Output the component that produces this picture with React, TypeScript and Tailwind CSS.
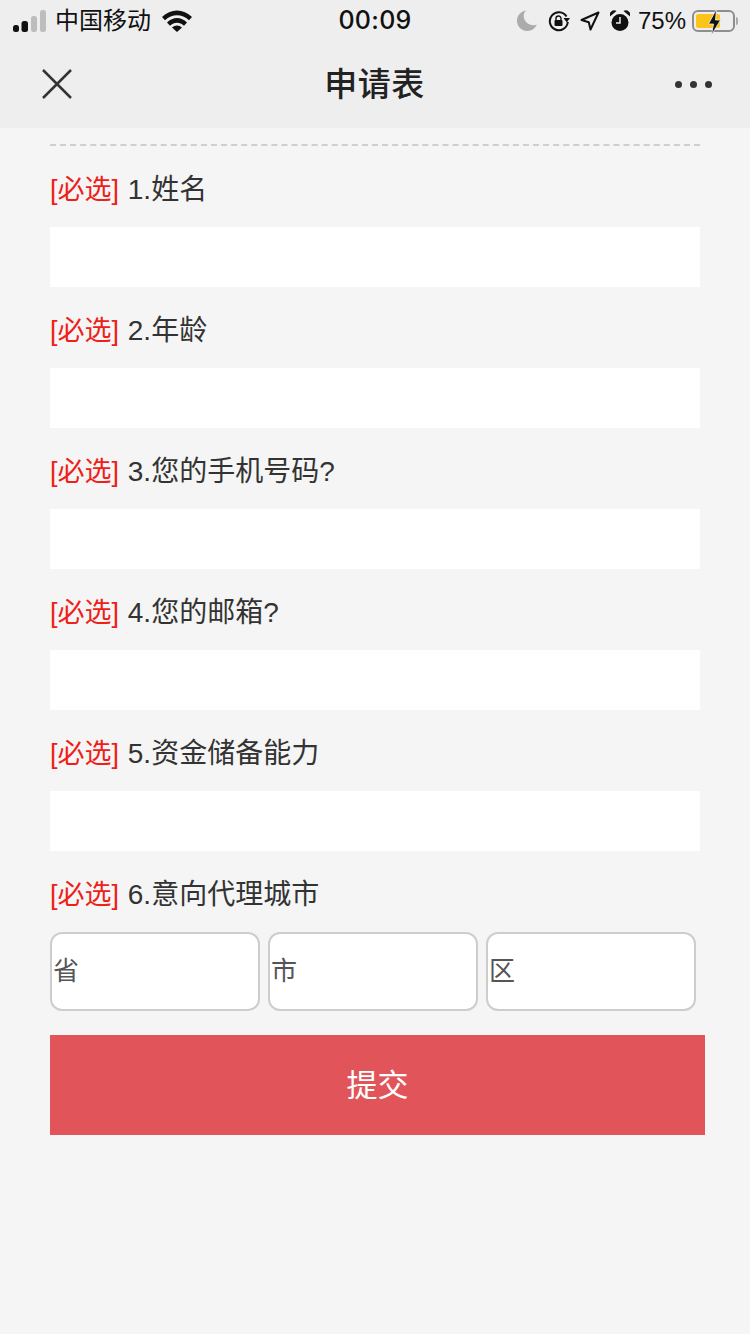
const fontStack = "[font-family:'Liberation_Sans','Noto_Sans_CJK_SC',sans-serif]"

const fields = ['1.姓名', '2.年龄', '3.您的手机号码?', '4.您的邮箱?', '5.资金储备能力']

function Label({ text }: { text: string }) {
  return (
    <div className="h-10 text-[28px] leading-[42px] text-[#333] whitespace-nowrap">
      <span className="mr-[1px] text-[27px] text-[#ee2018]">[必选]</span> {text}
    </div>
  )
}

function StatusBar() {
  return (
    <div className="h-10 flex items-center justify-between pl-[13px] pr-[12px] pt-[1px] text-[#111]">
      <div className="flex items-center w-[225px]">
        <svg width="34" height="22" viewBox="0 0 34 22">
          <rect x="0" y="15" width="6" height="7" rx="2.5" fill="#111" />
          <rect x="8.500" y="11" width="6.500" height="11" rx="2.5" fill="#111" />
          <rect x="18" y="6" width="6" height="16" rx="2.5" fill="#bdbdbd" />
          <rect x="27" y="0" width="6" height="22" rx="2.5" fill="#bdbdbd" />
        </svg>
        <span className="ml-[8px] text-[24px] leading-none">中国移动</span>
        <svg className="ml-[11px]" width="30" height="22" viewBox="0 0 30 22">
          <path d="M0 7C8.500-1.800 21.500-1.800 30 7l-3 3.300C20 3.600 10 3.600 3 10.300Z" fill="#111" />
          <path d="M5 12.500C10.800 6.500 19.200 6.500 25 12.500l-3 3.200C18 11.800 12 11.800 8 15.700Z" fill="#111" />
          <path d="M10 17.500c3-2.700 7-2.700 10 0L15 22Z" fill="#111" />
        </svg>
      </div>
      <span className="[font-family:Inter,sans-serif] text-[25px] leading-none font-medium tracking-[0.3px]">00:09</span>
      <div className="flex items-center justify-end w-[226px]">
        <svg width="20" height="21" viewBox="0 0 20 21">
          <path d="M9 .5C3.800 1.300 0 5.500 0 10.700 0 16.400 4.600 21 10.300 21c4.300 0 8-2.600 9.500-6.400-1.100.4-2.300.6-3.500.6C10.800 15.200 6.700 11 6.700 5.600c0-1.900.8-3.600 2.300-5.100Z" fill="#ababab" />
        </svg>
        <svg className="ml-[11px]" width="22" height="22" viewBox="0 0 22 22">
          <path d="M18.500 6.500A9 9 0 1 0 19.800 12" fill="none" stroke="#111" strokeWidth="2" />
          <path d="M15.500 8h6.500l-3.200 4.500Z" fill="#111" />
          <rect x="6.500" y="10" width="8" height="6" rx="1" fill="#111" />
          <path d="M8 10V8.500a2.500 2.500 0 0 1 5 0V10" fill="none" stroke="#111" strokeWidth="1.400" />
        </svg>
        <svg className="ml-[10px]" width="20" height="20" viewBox="0 0 20 20">
          <path d="M18.500 1.500 10.500 18.500 8.800 11.200 1.500 9Z" fill="none" stroke="#111" strokeWidth="2" strokeLinejoin="round" />
        </svg>
        <svg className="ml-[10px]" width="20" height="22" viewBox="0 0 20 22">
          <circle cx="10" cy="12.500" r="8.500" fill="#111" />
          <path d="M10 7v6H6" fill="none" stroke="#eee" strokeWidth="1.500" />
          <path d="M0 6.500a4.500 4.500 0 0 1 6.500-5.500ZM20 6.500a4.500 4.500 0 0 0-6.500-5.500Z" fill="#111" />
        </svg>
        <span className="ml-[8px] text-[24px] leading-none">75%</span>
        <div className="ml-[6px] flex items-center">
          <div className="relative w-[43px] h-[22px] rounded-[6px] border-2 border-[#8e8e8e] p-[2px]">
            <div className="h-full w-[24px] rounded-[2px] bg-[#fcc419]" />
            <svg className="absolute left-[13px] -top-[3px]" width="15" height="26" viewBox="0 0 14 26">
              <path d="M9 0 1 15h5L4 26l9-15H8Z" fill="#111" stroke="#eee" strokeWidth="0.800" />
            </svg>
          </div>
          <div className="ml-[1px] w-[2px] h-[8px] rounded-r-sm bg-[#aaa]" />
        </div>
      </div>
    </div>
  )
}

function NavBar() {
  return (
    <div className="h-[88px] flex items-center justify-between px-[38px]">
      <svg width="38" height="38" viewBox="0 0 38 38">
        <path d="M5 5 33 33M33 5 5 33" stroke="#333" strokeWidth="2.500" fill="none" />
      </svg>
      <h1 className="-ml-[2px] text-[33px] leading-none font-medium text-[#222] tracking-[0.500px]">申请表</h1>
      <div className="flex gap-[8px]">
        <span className="w-[7px] h-[7px] rounded-full bg-[#333]" />
        <span className="w-[7px] h-[7px] rounded-full bg-[#333]" />
        <span className="w-[7px] h-[7px] rounded-full bg-[#333]" />
      </div>
    </div>
  )
}

export default function App() {
  return (
    <div className={`w-[750px] h-[1334px] overflow-hidden bg-[#f5f5f5] ${fontStack}`}>
      <div className="h-[128px] bg-[#eeeeee]">
        <StatusBar />
        <NavBar />
      </div>

      <div className="pl-[50px] pr-[45px] pt-[16px]">
        <div className="w-[650px] border-t-2 border-dashed border-[#cfcfcf]" />

        {fields.map((text, i) => (
          <div key={i} className="pt-[23px]">
            <Label text={text} />
            <div className="mt-[18px] w-[650px] h-[60px] bg-white" />
          </div>
        ))}

        <div className="pt-[23px]">
          <Label text="6.意向代理城市" />
          <div className="mt-[18px] flex gap-[8px]">
            {['省', '市', '区'].map((t) => (
              <div
                key={t}
                className="w-[210px] h-[79px] flex items-center pl-[1px] bg-white border-2 border-[#cdcdcd] rounded-[12px] text-[26px] text-[#555]"
              >
                {t}
              </div>
            ))}
          </div>
        </div>

        <button className="mt-[24px] w-[655px] h-[100px] pt-[2px] bg-[#e1555a] text-white text-[31px] flex items-center justify-center">
          提交
        </button>
      </div>
    </div>
  )
}
